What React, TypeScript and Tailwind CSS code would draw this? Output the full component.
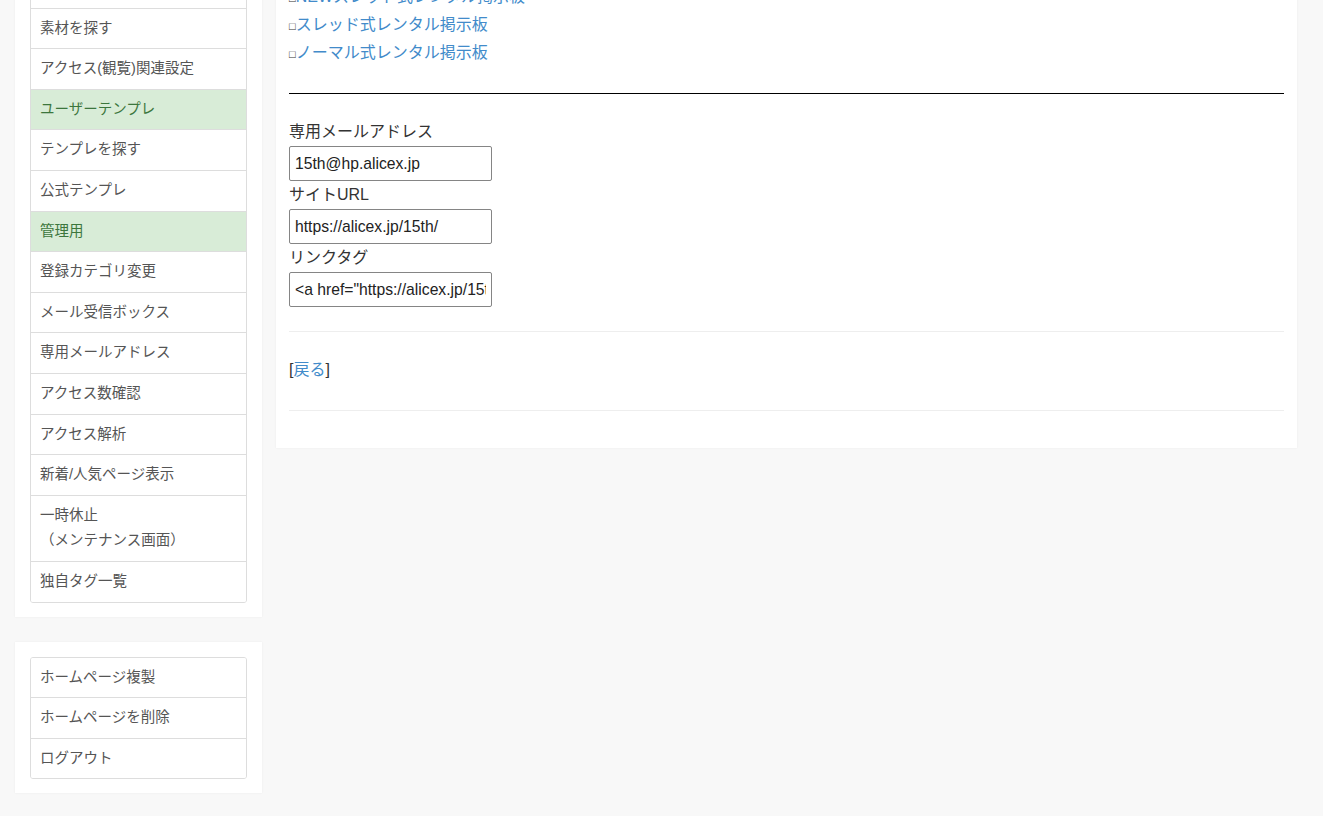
import React from "react"

const menu1 = [
  { label: "\u00a0" },
  { label: "素材を探す" },
  { label: "アクセス(観覧)関連設定" },
  { label: "ユーザーテンプレ", head: true },
  { label: "テンプレを探す" },
  { label: "公式テンプレ" },
  { label: "管理用", head: true },
  { label: "登録カテゴリ変更" },
  { label: "メール受信ボックス" },
  { label: "専用メールアドレス" },
  { label: "アクセス数確認" },
  { label: "アクセス解析" },
  { label: "新着/人気ページ表示" },
  { label: "一時休止\n（メンテナンス画面）" },
  { label: "独自タグ一覧" },
]

const menu2 = [{ label: "ホームページ複製" }, { label: "ホームページを削除" }, { label: "ログアウト" }]

function Menu({ items }: { items: { label: string; head?: boolean }[] }) {
  return (
    <ul className="border border-[#dddddd] rounded-[3px] overflow-hidden">
      {items.map((it, i) => (
        <li
          key={i}
          className={
            "px-[9px] py-[7px] leading-[25.6px] text-[14.5px] whitespace-pre-line " +
            (i < items.length - 1 ? "border-b border-[#dddddd] " : "") +
            (it.head ? "bg-[#d8ecd7] text-[#3c763d]" : "bg-white text-[#555555]")
          }
        >
          {it.label}
        </li>
      ))}
    </ul>
  )
}

function Field({ label, value }: { label: string; value: string }) {
  return (
    <div>
      <div className="leading-[28px] text-[16px] text-[#333333]">{label}</div>
      <input
        readOnly
        value={value}
        className="block w-[203px] h-[35px] border border-[#858585] rounded-[2px] px-[5px] text-[15.7px] text-[#222222] bg-white outline-none"
      />
    </div>
  )
}

const links = ["NEWスレッド式レンタル掲示板", "スレッド式レンタル掲示板", "ノーマル式レンタル掲示板"]

export default function App() {
  return (
    <div className="h-[816px] overflow-hidden bg-[#f8f8f8] font-['Liberation_Sans','Noto_Sans_CJK_JP',sans-serif]">
      <div className="-mt-[48px] flex items-start gap-[14px] pl-[15px]">
        <aside className="w-[247px] flex flex-col gap-[25px]">
          <div className="bg-white px-[15px] pt-[15px] pb-[14px] shadow-[0_0_2px_rgba(0,0,0,0.06)]">
            <Menu items={menu1} />
          </div>
          <div className="bg-white px-[15px] pt-[15px] pb-[14px] shadow-[0_0_2px_rgba(0,0,0,0.06)]">
            <Menu items={menu2} />
          </div>
        </aside>

        <main className="w-[1021px] bg-white px-[13px] pt-[31px] pb-[37px] shadow-[0_0_2px_rgba(0,0,0,0.06)]">
          <div className="text-[16px]">
            {links.map((l) => (
              <div key={l} className="h-[28px] leading-[28px] whitespace-nowrap">
                <span className="text-[11px] leading-none text-[#333333]">□</span>
                <a href="#" className="text-[#428bca]">{l}</a>
              </div>
            ))}
          </div>

          <hr className="mt-[26px] border-0 border-t border-black" />

          <div className="mt-[24px]">
            <Field label="専用メールアドレス" value="15th@hp.alicex.jp" />
            <Field label="サイトURL" value="https://alicex.jp/15th/" />
            <Field label="リンクタグ" value={'<a href="https://alicex.jp/15th/">'} />
          </div>

          <hr className="mt-[24px] border-0 border-t border-[#eeeeee]" />

          <p className="mt-[24px] mb-[26px] h-[28px] text-[16px] leading-[28px] text-[#333333]">
            [<a href="#" className="text-[#428bca]">戻る</a>]
          </p>

          <hr className="border-0 border-t border-[#eeeeee]" />
        </main>
      </div>
    </div>
  )
}
